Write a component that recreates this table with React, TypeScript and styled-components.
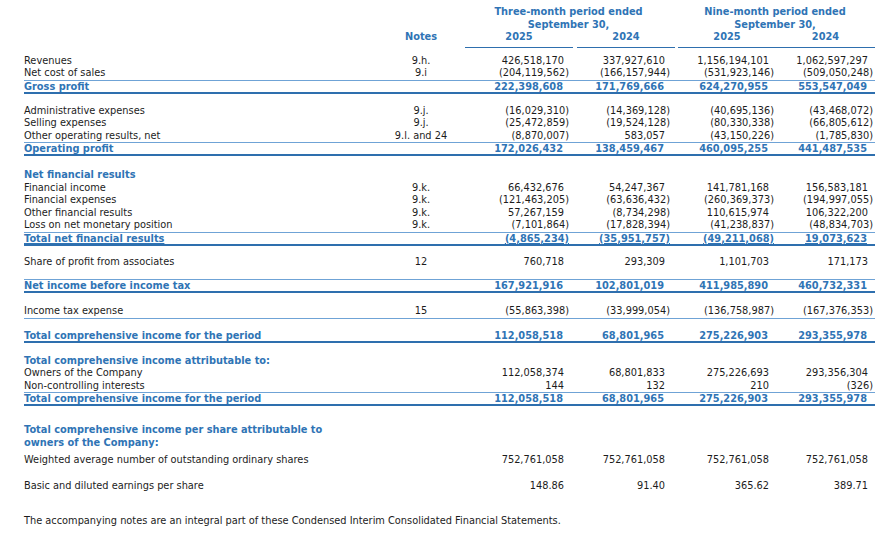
import { FunctionComponent, Fragment } from "react";
import styled, { createGlobalStyle, css } from "styled-components";

const BLUE = "#2f74b5";
const RULE_LIGHT = "#6fa3d6";
const RULE_DARK = "#2e6fae";
const COLS = "356px 82px 111px 102px 101px 99px";
// right inset of each amount column (where a closing paren ends)
const INSETS = [4, 5, 2, 2];

const GlobalStyle = createGlobalStyle`
  body {
    margin: 0;
    background: #ffffff;
    font-family: "DejaVu Sans", Verdana, sans-serif;
  }
`;

const Page = styled.div`
  width: 851px;
  padding: 6px 0 0 24px;
  font-size: 9.8px;
  color: #1c1c1c;
`;

const Head = styled.div`
  display: grid;
  grid-template-columns: ${COLS};
  line-height: 12.5px;
  font-weight: bold;
  color: ${BLUE};
`;

const Period = styled.div<{ $col: number }>`
  grid-column: ${(p) => p.$col} / span 2;
  grid-row: 1 / span 2;
  text-align: center;
`;

const NotesHead = styled.div`
  grid-column: 2;
  grid-row: 3;
  text-align: center;
`;

const Year = styled.div<{ $col: number; $inset: number }>`
  grid-column: ${(p) => p.$col};
  grid-row: 3;
  margin-left: ${(p) => p.$inset}px;
  padding-bottom: 3px;
  border-bottom: 1px solid ${RULE_DARK};
  text-align: center;
`;

type RowKind = "line" | "total" | "heading";

const Row = styled.div<{
  $gap: number;
  $kind: RowKind;
  $open?: boolean;
  $rule?: boolean;
  $underline?: boolean;
}>`
  display: grid;
  grid-template-columns: ${COLS};
  margin-top: ${(p) => p.$gap}px;
  line-height: 12.5px;
  white-space: nowrap;
  ${(p) =>
    p.$kind === "total" &&
    css`
      line-height: 11px;
      font-weight: bold;
      color: ${BLUE};
      border-top: ${p.$open ? "none" : `1px solid ${RULE_LIGHT}`};
      border-bottom: 2px solid ${RULE_DARK};
    `}
  ${(p) =>
    p.$kind === "heading" &&
    css`
      font-weight: bold;
      color: ${BLUE};
    `}
  ${(p) =>
    p.$rule &&
    css`
      border-bottom: 1px solid ${RULE_LIGHT};
    `}
  ${(p) =>
    p.$underline &&
    css`
      text-decoration: underline;
      text-underline-offset: 1px;
    `}
`;

const Label = styled.div`
  grid-column: 1;
`;

const Note = styled.div`
  text-align: center;
`;

const Amount = styled.div<{ $inset: number }>`
  text-align: right;
  padding-right: ${(p) => p.$inset}px;
`;

const Footer = styled.p`
  margin: 23px 0 0;
  line-height: 12.5px;
`;

type Line = {
  label: string;
  note?: string;
  values?: string[];
  kind?: RowKind;
  gap?: number;
  open?: boolean;
  rule?: boolean;
  underline?: boolean;
};

const total = "Total comprehensive income for the period";

const lines: Line[] = [
  { gap: 7, label: "Revenues", note: "9.h.", values: ["426,518,170", "337,927,610", "1,156,194,101", "1,062,597,297"] },
  { label: "Net cost of sales", note: "9.i", values: ["(204,119,562)", "(166,157,944)", "(531,923,146)", "(509,050,248)"] },
  { kind: "total", label: "Gross profit", values: ["222,398,608", "171,769,666", "624,270,955", "553,547,049"] },
  { gap: 11, label: "Administrative expenses", note: "9.j.", values: ["(16,029,310)", "(14,369,128)", "(40,695,136)", "(43,468,072)"] },
  { label: "Selling expenses", note: "9.j.", values: ["(25,472,859)", "(19,524,128)", "(80,330,338)", "(66,805,612)"] },
  { label: "Other operating results, net", note: "9.l. and 24", values: ["(8,870,007)", "583,057", "(43,150,226)", "(1,785,830)"] },
  { kind: "total", label: "Operating profit", values: ["172,026,432", "138,459,467", "460,095,255", "441,487,535"] },
  { gap: 13, kind: "heading", label: "Net financial results" },
  { label: "Financial income", note: "9.k.", values: ["66,432,676", "54,247,367", "141,781,168", "156,583,181"] },
  { label: "Financial expenses", note: "9.k.", values: ["(121,463,205)", "(63,636,432)", "(260,369,373)", "(194,997,055)"] },
  { label: "Other financial results", note: "9.k.", values: ["57,267,159", "(8,734,298)", "110,615,974", "106,322,200"] },
  { label: "Loss on net monetary position", note: "9.k.", values: ["(7,101,864)", "(17,828,394)", "(41,238,837)", "(48,834,703)"] },
  { kind: "total", underline: true, label: "Total net financial results", values: ["(4,865,234)", "(35,951,757)", "(49,211,068)", "19,073,623"] },
  { gap: 10, label: "Share of profit from associates", note: "12", values: ["760,718", "293,309", "1,101,703", "171,173"] },
  { gap: 11, kind: "total", label: "Net income before income tax", values: ["167,921,916", "102,801,019", "411,985,890", "460,732,331"] },
  { gap: 12, rule: true, label: "Income tax expense", note: "15", values: ["(55,863,398)", "(33,999,054)", "(136,758,987)", "(167,376,353)"] },
  { gap: 11, kind: "total", open: true, label: total, values: ["112,058,518", "68,801,965", "275,226,903", "293,355,978"] },
  { gap: 12, kind: "heading", label: "Total comprehensive income attributable to:" },
  { label: "Owners of the Company", values: ["112,058,374", "68,801,833", "275,226,693", "293,356,304"] },
  { label: "Non-controlling interests", values: ["144", "132", "210", "(326)"] },
  { kind: "total", label: total, values: ["112,058,518", "68,801,965", "275,226,903", "293,355,978"] },
  { gap: 18, kind: "heading", label: "Total comprehensive income per share attributable to\nowners of the Company:" },
  { gap: 5, label: "Weighted average number of outstanding ordinary shares", values: ["752,761,058", "752,761,058", "752,761,058", "752,761,058"] },
  { gap: 13, label: "Basic and diluted earnings per share", values: ["148.86", "91.40", "365.62", "389.71"] },
];

const amountInset = (value: string, col: number, bold: boolean) =>
  INSETS[col] + (value.startsWith("(") ? 0 : bold ? 6 : 5);

const Statement: FunctionComponent = () => (
  <Page>
    <Head>
      <Period $col={3}>
        Three-month period ended
        <br />
        September 30,
      </Period>
      <Period $col={5}>
        Nine-month period ended
        <br />
        September 30,
      </Period>
      <NotesHead>Notes</NotesHead>
      <Year $col={3} $inset={3}>2025</Year>
      <Year $col={4} $inset={4}>2024</Year>
      <Year $col={5} $inset={3}>2025</Year>
      <Year $col={6} $inset={0}>2024</Year>
    </Head>

    {lines.map((line, i) => {
      const kind = line.kind ?? "line";
      return (
        <Row
          key={i}
          $gap={line.gap ?? 0}
          $kind={kind}
          $open={line.open}
          $rule={line.rule}
          $underline={line.underline}
        >
          <Label>
            {line.label.split("\n").map((part, j) => (
              <Fragment key={j}>
                {j > 0 && <br />}
                {part}
              </Fragment>
            ))}
          </Label>
          {line.values && (
            <>
              <Note>{line.note ?? ""}</Note>
              {line.values.map((v, c) => (
                <Amount key={c} $inset={amountInset(v, c, kind === "total")}>
                  {v}
                </Amount>
              ))}
            </>
          )}
        </Row>
      );
    })}

    <Footer>
      The accompanying notes are an integral part of these Condensed Interim
      Consolidated Financial Statements.
    </Footer>
  </Page>
);

const App: FunctionComponent = () => (
  <>
    <GlobalStyle />
    <Statement />
  </>
);

export default App;
